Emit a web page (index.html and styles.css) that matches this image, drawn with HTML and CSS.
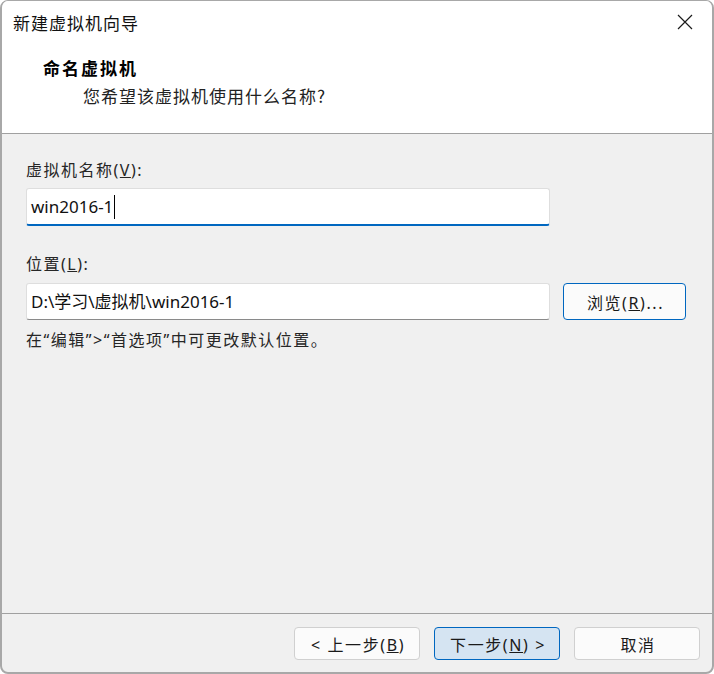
FILE: index.html
```html
<!DOCTYPE html>
<html lang="zh-CN">
<head>
  <meta charset="UTF-8" />
  <title>新建虚拟机向导</title>
  <link rel="stylesheet" href="styles.css">
</head>
<body>
  <div class="window">
    <div class="titlebar">
      <span class="title">新建虚拟机向导</span>
      <span class="close">
        <svg width="16" height="16" viewBox="0 0 16 16">
          <path d="M1 1 L15 15 M15 1 L1 15" stroke="#1b1b1b" stroke-width="1.2" fill="none" />
        </svg>
      </span>
    </div>
    <div class="header">
      <div class="heading">命名虚拟机</div>
      <div class="subheading">您希望该虚拟机使用什么名称?</div>
    </div>
    <div class="content">
      <div class="label label-first">虚拟机名称(<u>V</u>):</div>
      <div class="field active"><span>win2016-1</span><span class="caret"></span></div>
      <div class="label label-second">位置(<u>L</u>):</div>
      <div class="row">
        <div class="field">D:\学习\虚拟机\win2016-1</div>
        <button class="btn btn-browse">浏览(<u>R</u>)...</button>
      </div>
      <div class="hint">在“编辑”&gt;“首选项”中可更改默认位置。</div>
    </div>
    <div class="footer">
      <button class="btn">&lt; 上一步(<u>B</u>)</button>
      <button class="btn primary">下一步(<u>N</u>) &gt;</button>
      <button class="btn">取消</button>
    </div>
  </div>
</body>
</html>
```
FILE: styles.css
```css
* { box-sizing: border-box; }
html, body {
  margin: 0;
  padding: 0;
  background: #ffffff;
}
body {
  font-family: "Noto Sans", "Noto Sans CJK SC", sans-serif;
  color: #1a1a1a;
}
.window {
  width: 714px;
  height: 674px;
  display: flex;
  flex-direction: column;
  border: 2px solid #a8a8a8;
  border-top-width: 1px;
  border-radius: 8px;
  overflow: hidden;
  background: #f0f0f0;
}
.titlebar {
  height: 44px;
  background: #ffffff;
  display: flex;
  align-items: center;
  justify-content: space-between;
  padding: 0 16px 2px 11px;
}
.title {
  font-family: "Noto Sans CJK SC", sans-serif;
  font-size: 17px;
  letter-spacing: 1px;
  color: #111;
}
.close {
  display: flex;
  width: 16px;
  height: 16px;
  margin-right: 3px;
}
.header {
  height: 89px;
  background: #ffffff;
  border-bottom: 1px solid #a0a0a0;
  padding-top: 12px;
}
.heading {
  font-family: "Noto Sans CJK SC", sans-serif;
  font-size: 17px;
  font-weight: bold;
  letter-spacing: 2px;
  line-height: 22px;
  padding-left: 41px;
  color: #000;
}
.subheading {
  font-family: "Noto Sans CJK SC", sans-serif;
  font-size: 17px;
  letter-spacing: 1px;
  line-height: 24px;
  margin-top: 5px;
  padding-left: 81px;
  color: #222;
}
.content {
  flex: 1;
  padding: 0 24px;
  border-bottom: 1px solid #a0a0a0;
}
.label, .hint {
  font-family: "Noto Sans", "Noto Sans CJK SC", sans-serif;
  font-size: 16px;
  letter-spacing: 1.5px;
  line-height: 22px;
  color: #262626;
}
.label-first { margin-top: 25px; margin-bottom: 7px; }
.label-second { margin-top: 27px; margin-bottom: 8px; }
.hint { margin-top: 9px; }
.field {
  width: 524px;
  height: 37px;
  background: #ffffff;
  border: 1px solid #dedede;
  border-bottom-color: #8a8a8a;
  border-radius: 3px;
  padding: 0 4px;
  font-size: 17px;
  line-height: 35px;
  color: #111;
  display: flex;
  align-items: center;
}
.field.active {
  height: 38px;
  border-bottom: 2px solid #0067c0;
}
.caret {
  width: 1px;
  height: 24px;
  background: #000;
  margin-left: 1px;
}
.row {
  display: flex;
  align-items: center;
  gap: 13px;
}
.btn {
  width: 126px;
  height: 33px;
  padding: 0 0 0 2px;
  background: #fbfbfb;
  border: 1px solid #d0d0d0;
  border-radius: 4px;
  font-family: "Noto Sans", "Noto Sans CJK SC", sans-serif;
  font-size: 16px;
  letter-spacing: 1.6px;
  color: #1a1a1a;
}
.btn-browse {
  width: 123px;
  height: 37px;
  border-color: #0067c0;
}
.primary {
  background: #d5e4f2;
  border-color: #0067c0;
}
.footer {
  height: 58px;
  display: flex;
  justify-content: flex-end;
  gap: 14px;
  padding: 13px 12px 0 0;
}
```
